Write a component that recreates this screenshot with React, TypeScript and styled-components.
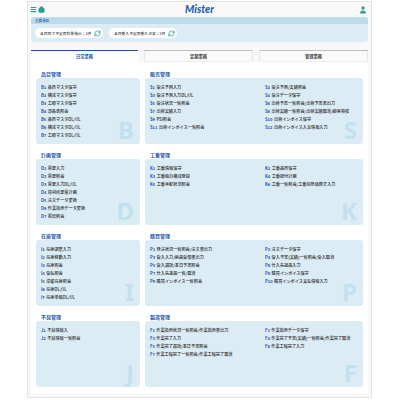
import { createGlobalStyle } from "styled-components";
import styled from "styled-components";
import { Menu, Home, RefreshCw } from "lucide-react";

const GlobalStyle = createGlobalStyle`
  html, body {
    margin: 0;
    padding: 0;
    width: 400px;
    height: 400px;
    overflow: hidden;
    background: #fff;
    font-family: "Noto Sans CJK JP", "Noto Sans", sans-serif;
  }
  * { box-sizing: border-box; }
`;

const Page = styled.div`
  width: 400px;
  height: 400px;
  padding: 1px 28px 2px 27px;
`;

const Frame = styled.div`
  height: 397px;
  display: flex;
  flex-direction: column;
  padding: 0 3px 4px;
  background: #f8f8f8;
  border: 1px solid #e4e4e4;
`;

const Header = styled.header`
  height: 15px;
  flex: none;
  display: flex;
  align-items: center;
  justify-content: space-between;
  padding: 0 2px 0 0;
  position: relative;
  color: #2d9c95;
`;

const HeaderIcons = styled.div`
  display: flex;
  align-items: center;
  gap: 1px;
  margin-left: -1px;
`;

const Logo = styled.div`
  position: absolute;
  left: 0;
  right: 0;
  top: 1px;
  text-align: center;
  font-family: "Lato", sans-serif;
  font-style: italic;
  font-weight: 900;
  font-size: 10.5px;
  line-height: 13px;
  color: #1f5fae;
`;

const Notice = styled.section`
  height: 25px;
  flex: none;
  border-radius: 3px;
  background: #dcecf5;
  overflow: hidden;
`;

const NoticeHead = styled.div`
  height: 7px;
  padding-left: 4px;
  background: #bcdcec;
  font-size: 3.5px;
  line-height: 7px;
  font-weight: 500;
  color: #2a5ba8;
`;

const NoticeBody = styled.div`
  display: flex;
  gap: 6px;
  padding: 4px 0 0 4px;
`;

const Pill = styled.div`
  width: 68px;
  height: 10px;
  display: flex;
  align-items: center;
  justify-content: space-between;
  padding: 0 2px 0 5px;
  border-radius: 5px;
  background: #fff;
  font-size: 3.8px;
  font-weight: 500;
  color: #333;
  svg {
    color: #2d9c95;
  }
`;

const Tabs = styled.nav`
  flex: none;
  display: flex;
  gap: 6px;
  margin-top: 8px;
`;

const Tab = styled.div<{ $active?: boolean }>`
  flex: 1;
  height: 12px;
  text-align: center;
  font-size: 4.25px;
  line-height: 11px;
  font-weight: 700;
  color: ${(p) => (p.$active ? "#2a5ba8" : "#444")};
  background: ${(p) => (p.$active ? "#fff" : "#fafafa")};
  border-top: 1px solid ${(p) => (p.$active ? "#1d4fa3" : "#bdbdbd")};
  border-left: ${(p) => (p.$active ? "none" : "1px solid #e6e6e6")};
  border-right: ${(p) => (p.$active ? "none" : "1px solid #e6e6e6")};
  border-bottom: ${(p) => (p.$active ? "none" : "1px solid #eee")};
`;

const Body = styled.main`
  flex: 1;
  min-height: 0;
  background: #fff;
  padding: 6px 4px 0 5px;
  display: grid;
  grid-template-columns: 104px 218px;
  column-gap: 5px;
  align-content: start;
`;

const Section = styled.section`
  height: 81px;
  display: flex;
  flex-direction: column;
`;

const SectionTitle = styled.h2`
  flex: none;
  height: 10px;
  margin: 0;
  padding: 2px 0 0 5px;
  font-size: 5px;
  line-height: 8px;
  font-weight: 700;
  color: #2558ad;
`;

const Card = styled.div<{ $wide?: boolean }>`
  position: relative;
  height: 66px;
  padding: 5px 5px 0;
  border-radius: 3px;
  background: #dcecf5;
  display: grid;
  grid-template-columns: ${(p) => (p.$wide ? "115px 1fr" : "1fr")};
  grid-auto-rows: 8px;
  align-content: start;
`;

const Item = styled.div`
  font-size: 4.15px;
  line-height: 8px;
  font-weight: 500;
  white-space: nowrap;
  color: #2b2b2b;
  position: relative;
  z-index: 1;
`;

const Code = styled.span`
  color: #2558ad;
  font-weight: 700;
  margin-right: 1.4px;
`;

const Mark = styled.span`
  position: absolute;
  right: 6px;
  bottom: 2px;
  font-family: "Noto Sans", sans-serif;
  font-weight: 700;
  font-size: 24px;
  line-height: 24px;
  color: #c3e0ef;
`;

const sections = [
  {
    title: "品目管理", mark: "B", wide: false,
    items: ["B1 品目マスタ保守", "B2 構成マスタ保守", "B3 工順マスタ保守", "B4 部品表照会", "B5 品目マスタDL/UL", "B6 構成マスタDL/UL", "B7 工順マスタDL/UL"],
  },
  {
    title: "販売管理", mark: "S", wide: true,
    items: ["S1 受注予測入力", "S2 受注予測/実績照会", "S3 受注予測入力DL/UL", "S4 受注データ保守", "S5 受注状況一覧照会", "S6 出荷予定一覧照会/出荷予定表出力", "S7 出荷実績入力", "S8 出荷実績一覧照会/出荷実績取消/顧客検収", "S9 PSI照会", "S10 出荷インボイス保守", "S11 出荷インボイス一覧照会", "S12 出荷インボイス入金情報入力"],
  },
  {
    title: "計画管理", mark: "D", wide: false,
    items: ["D1 需要入力", "D2 需要照会", "D3 需要入力DL/UL", "D4 資材所要量計画", "D5 注文データ変換", "D6 作業指示データ変換", "D7 需給照会"],
  },
  {
    title: "工番管理", mark: "K", wide: true,
    items: ["K1 工番情報保守", "K2 工番品目保守", "K3 工番独自構成登録", "K4 工番紐付計画", "K5 工番手配状況照会", "K6 工番一覧照会/工番別原価修正入力"],
  },
  {
    title: "在庫管理", mark: "I", wide: false,
    items: ["I1 在庫調整入力", "I2 在庫移動入力", "I3 在庫照会", "I4 受払照会", "I5 滞留在庫照会", "I6 在庫DL/UL", "I7 在庫単価DL/UL"],
  },
  {
    title: "購買管理", mark: "P", wide: true,
    items: ["P1 発注状況一覧照会/注文書出力", "P2 注文データ保守", "P3 受入入力/納品受領書出力", "P4 受入予定(実績)一覧照会/受入取消", "P5 受入週話/本日予定照会", "P6 仕入先返品入力", "P7 仕入先返品一覧/取消", "P8 購買インボイス保守", "P9 購買インボイス一覧照会", "P10 購買インボイス支払情報入力"],
  },
  {
    title: "不良管理", mark: "J", wide: false,
    items: ["J1 不良情報入", "J2 不良情報一覧照会"],
  },
  {
    title: "製造管理", mark: "F", wide: true,
    items: ["F1 作業指示状況一覧照会/作業指示書出力", "F2 作業指示データ保守", "F3 作業完了入力", "F4 作業完了予定(実績)一覧照会/作業完了取消", "F5 作業完了週話/本日予定照会", "F6 作業工程完了入力", "F7 作業工程完了一覧照会/作業工程完了取消"],
  },
];

function UserIcon() {
  return (
    <svg width="6" height="8" viewBox="0 0 14 18" fill="#2d9c95">
      <circle cx="7" cy="4.5" r="4" />
      <path d="M0 17c0-5 3-7 7-7s7 2 7 7z" />
    </svg>
  );
}

function App() {
  return (
    <>
      <GlobalStyle />
      <Page>
        <Frame>
          <Header>
            <HeaderIcons>
              <Menu size={7} strokeWidth={4} />
              <Home size={7} strokeWidth={3} fill="#2d9c95" />
            </HeaderIcons>
            <Logo>Mister</Logo>
            <UserIcon />
          </Header>
          <Notice>
            <NoticeHead>重要通知</NoticeHead>
            <NoticeBody>
              <Pill>
                本日完了予定の作業指示：2件
                <RefreshCw size={7} strokeWidth={2.5} />
              </Pill>
              <Pill>
                本日受入予定の受入注文：2件
                <RefreshCw size={7} strokeWidth={2.5} />
              </Pill>
            </NoticeBody>
          </Notice>
          <Tabs>
            <Tab $active>日常業務</Tab>
            <Tab>定期業務</Tab>
            <Tab>管理業務</Tab>
          </Tabs>
          <Body>
            {sections.map((s) => (
              <Section key={s.mark}>
                <SectionTitle>{s.title}</SectionTitle>
                <Card $wide={s.wide}>
                  {s.items.map((it) => {
                    const [code, ...rest] = it.split(" ");
                    return (
                      <Item key={code}>
                        <Code>{code}</Code>
                        {rest.join(" ")}
                      </Item>
                    );
                  })}
                  <Mark>{s.mark}</Mark>
                </Card>
              </Section>
            ))}
          </Body>
        </Frame>
      </Page>
    </>
  );
}

export default App;
